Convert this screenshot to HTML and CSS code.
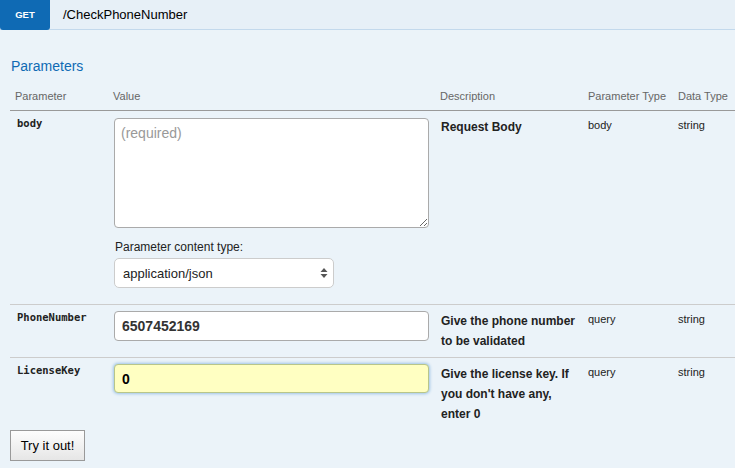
FILE: index.html
```html
<!DOCTYPE html>
<html>
<head>
<meta charset="utf-8">
<link rel="stylesheet" href="styles.css">
</head>
<body>
<div class="heading">
  <span class="method">GET</span>
  <span class="path">/CheckPhoneNumber</span>
</div>
<div class="content">
  <h4 class="title">Parameters</h4>
  <table class="params">
    <colgroup>
      <col class="c1"><col class="c2"><col class="c3"><col class="c4"><col class="c5">
    </colgroup>
    <thead>
      <tr>
        <th>Parameter</th>
        <th>Value</th>
        <th>Description</th>
        <th>Parameter Type</th>
        <th>Data Type</th>
      </tr>
    </thead>
    <tbody>
      <tr>
        <td class="pname">body</td>
        <td>
          <textarea class="body-area" placeholder="(required)"></textarea>
          <div class="ctype-label">Parameter content type:</div>
          <div class="select-wrap">
            <select class="ctype">
              <option>application/json</option>
            </select>
            <svg class="arrows" width="8" height="12" viewBox="0 0 8 12"><path d="M4 1 L7.5 5 L0.5 5 Z M4 11 L7.5 7 L0.5 7 Z" fill="#555"/></svg>
          </div>
        </td>
        <td class="desc">Request Body</td>
        <td class="ptype">body</td>
        <td class="ptype">string</td>
      </tr>
      <tr>
        <td class="pname">PhoneNumber</td>
        <td><input class="field" type="text" value="6507452169"></td>
        <td class="desc">Give the phone number to be validated</td>
        <td class="ptype">query</td>
        <td class="ptype">string</td>
      </tr>
      <tr class="last">
        <td class="pname">LicenseKey</td>
        <td><input class="field focused" type="text" value="0"></td>
        <td class="desc">Give the license key. If you don't have any, enter 0</td>
        <td class="ptype">query</td>
        <td class="ptype">string</td>
      </tr>
    </tbody>
  </table>
  <div class="actions">
    <button class="submit" type="button">Try it out!</button>
  </div>
</div>
</body>
</html>
```
FILE: styles.css
```css
html, body {
  margin: 0;
  padding: 0;
  background: #ebf3f9;
  font-family: "Liberation Sans", Arial, sans-serif;
  color: #000;
  overflow: hidden;
}
.heading {
  display: flex;
  align-items: center;
  height: 30px;
  background: #e7f0f7;
  border-bottom: 1px solid #c3d9ec;
  box-sizing: border-box;
}
.method {
  display: flex;
  align-items: center;
  justify-content: center;
  width: 50px;
  height: 30px;
  background: #0f6ab4;
  color: #fff;
  font-weight: bold;
  font-size: 9.5px;
  border-radius: 0 0 3px 3px;
}
.path {
  margin-left: 13px;
  font-size: 13px;
  color: #000;
}
.content {
  padding: 0 0 0 10px;
}
.title {
  margin: 0;
  padding: 28px 0 0 1px;
  font-size: 14px;
  font-weight: normal;
  color: #0f6ab4;
  line-height: 16px;
}
.params {
  margin-top: 9px;
  width: 725px;
  border-collapse: collapse;
  table-layout: fixed;
}
.c1 { width: 98px; }
.c2 { width: 327px; }
.c3 { width: 148px; }
.c4 { width: 90px; }
.c5 { width: 62px; }
.params th {
  text-align: left;
  font-weight: normal;
  font-size: 11px;
  color: #666;
  padding: 7px 5px 7px;
  line-height: 13px;
  border-bottom: 1px solid #999;
}
.params td {
  vertical-align: top;
  padding: 6px 5px;
  border-bottom: 1px solid #ccc;
  line-height: 20px;
}
.params tr.last td {
  border-bottom: none;
}
.pname {
  font-family: "DejaVu Sans Mono", monospace;
  font-weight: bold;
  font-size: 10.5px;
  color: #222;
  line-height: 13px !important;
  padding-left: 7px !important;
}
.desc {
  font-weight: bold;
  font-size: 12px;
  color: #222;
  padding-left: 6px !important;
  padding-right: 2px !important;
}
.ptype {
  font-size: 11px;
  color: #222;
  line-height: 16px !important;
}
.body-area {
  display: block;
  box-sizing: border-box;
  width: 315px;
  height: 110px;
  margin: 1px 0 0 1px;
  padding: 6px 6px;
  border: 1px solid #aaa;
  border-radius: 4px;
  background: #fff;
  font-family: "Liberation Sans", Arial, sans-serif;
  font-size: 14px;
  resize: both;
}
.body-area::placeholder {
  color: #999;
}
.ctype-label {
  margin: 11px 0 0 2px;
  font-size: 12px;
  line-height: 16px;
  color: #222;
}
.select-wrap {
  position: relative;
  width: 220px;
  margin: 3px 0 10px 1px;
}
.ctype {
  display: block;
  appearance: none;
  -webkit-appearance: none;
  box-sizing: border-box;
  width: 220px;
  height: 30px;
  padding: 0 8px;
  border: 1px solid #ccc;
  border-radius: 5px;
  background: #fff;
  font-family: "Liberation Sans", Arial, sans-serif;
  font-size: 13px;
  color: #222;
}
.arrows {
  position: absolute;
  right: 6px;
  top: 9px;
  pointer-events: none;
}
.field {
  display: block;
  box-sizing: border-box;
  width: 315px;
  height: 30px;
  margin: 0 0 0 1px;
  padding: 0 7px;
  border: 1px solid #aaa;
  border-radius: 4px;
  background: #fff;
  font-family: "Liberation Sans", Arial, sans-serif;
  font-weight: bold;
  font-size: 14px;
  color: #333;
}
.field.focused {
  background: #ffffc2;
  border-color: #b8c58a;
  box-shadow: 0 0 3px 1px #9fc4e6;
  color: #000;
  height: 29px;
}
.actions {
  padding-top: 0;
}
.submit {
  box-sizing: border-box;
  width: 75px;
  height: 31px;
  padding: 0;
  border: 1px solid #999;
  border-radius: 0;
  background: linear-gradient(#fdfdfd, #e6e6e6);
  font-family: "Liberation Sans", Arial, sans-serif;
  font-size: 13px;
  color: #000;
}
```
